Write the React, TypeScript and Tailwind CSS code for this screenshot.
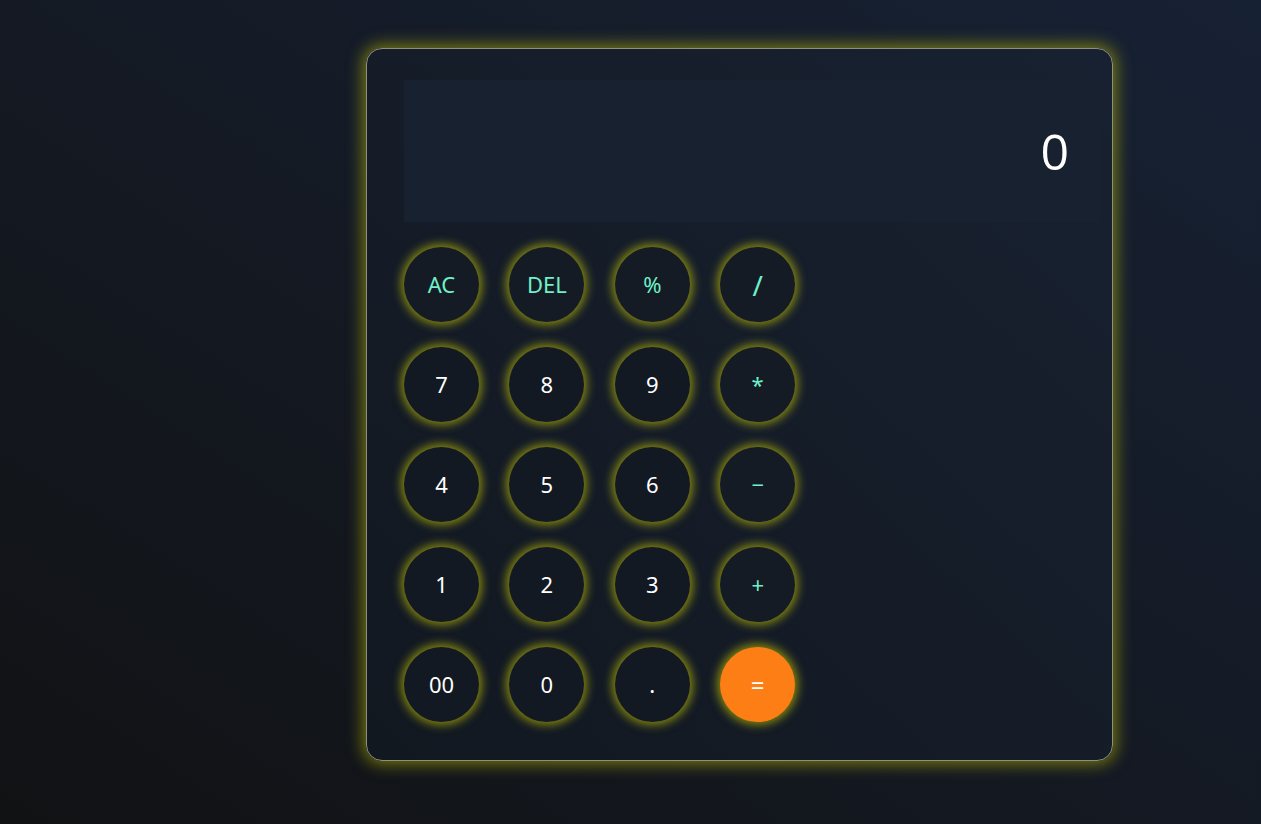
import React from "react";

const rows: { label: string; kind: "op" | "num" | "eq" }[][] = [
  [
    { label: "AC", kind: "op" },
    { label: "DEL", kind: "op" },
    { label: "%", kind: "op" },
    { label: "/", kind: "op" },
  ],
  [
    { label: "7", kind: "num" },
    { label: "8", kind: "num" },
    { label: "9", kind: "num" },
    { label: "*", kind: "op" },
  ],
  [
    { label: "4", kind: "num" },
    { label: "5", kind: "num" },
    { label: "6", kind: "num" },
    { label: "−", kind: "op" },
  ],
  [
    { label: "1", kind: "num" },
    { label: "2", kind: "num" },
    { label: "3", kind: "num" },
    { label: "+", kind: "op" },
  ],
  [
    { label: "00", kind: "num" },
    { label: "0", kind: "num" },
    { label: ".", kind: "num" },
    { label: "=", kind: "eq" },
  ],
];

export default function App() {
  return (
    <div className="w-[1261px] h-[824px] overflow-hidden bg-gradient-to-tr from-[#111214] to-[#172134] font-['Noto_Sans',sans-serif]">
      <div className="flex pt-[48px] pl-[366px]">
        <div className="w-[747px] h-[713px] rounded-[16px] border border-[#8f8f80] bg-gradient-to-tr from-[#121820] to-[#182131] shadow-[0_0_16px_3px_rgba(200,200,0,0.55)] pl-[37px] pt-[31px]">
          <div className="w-[696px] h-[142px] bg-[#182130] flex items-center justify-end pr-[31px]">
            <span className="text-[50px] leading-none text-white font-['Open_Sans',sans-serif] font-normal">0</span>
          </div>
          <div className="mt-[25px] flex flex-col gap-[25px]">
            {rows.map((row, i) => (
              <div key={i} className="grid grid-cols-[75px_75px_75px_75px] gap-x-[30.4px]">
                {row.map((b) => (
                  <div
                    key={b.label}
                    className={
                      b.kind === "eq"
                        ? "w-[75px] h-[75px] rounded-full bg-[#fd7e14] text-white flex items-center justify-center text-[24px] shadow-[0_0_10px_3px_rgba(210,210,0,0.6)]"
                        : b.kind === "op"
                        ? `w-[75px] h-[75px] rounded-full bg-[#151b25] text-[#6ff0c8] flex items-center justify-center shadow-[0_0_10px_3px_rgba(210,210,0,0.6)] ${b.label === "/" ? "text-[28px]" : "text-[22px]"}`
                        : "w-[75px] h-[75px] rounded-full bg-[#131922] text-white flex items-center justify-center text-[22px] shadow-[0_0_10px_3px_rgba(210,210,0,0.6)]"
                    }
                  >
                    {b.label}
                  </div>
                ))}
              </div>
            ))}
          </div>
        </div>
      </div>
    </div>
  );
}
